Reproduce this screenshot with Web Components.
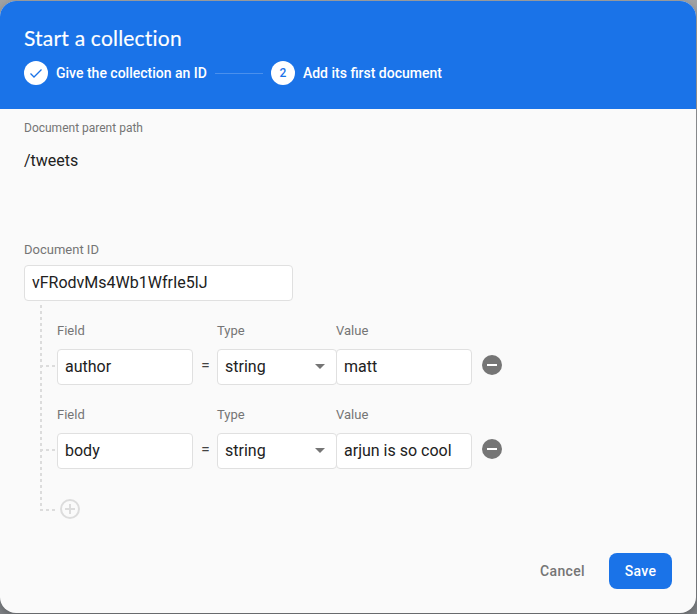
<!DOCTYPE html>
<html lang="en"><head><meta charset="utf-8"><title>Start a collection</title>
<style>
html,body{margin:0;height:100%;overflow:hidden}
body{background:linear-gradient(#a0a2a4,#94979b 40%,#808387);font-family:Roboto,"Liberation Sans",sans-serif;color:#212121}
</style></head><body>
<collection-dialog></collection-dialog>
<script>
const define=(name,html)=>customElements.define(name,class extends HTMLElement{
  constructor(){super();const t=document.createElement('template');t.innerHTML=html;
    this.attachShadow({mode:'open'}).append(t.content.cloneNode(true));}
});
define('step-item',`<style>
:host{display:flex;align-items:center;gap:8px;height:24px;font-size:14px;font-weight:500;letter-spacing:0;color:#fff;white-space:nowrap}
.dot{width:24px;height:24px;border-radius:50%;background:#fff;color:#1a73e8;display:grid;place-items:center;font-size:12px;letter-spacing:0}
</style><span class="dot"><slot name="mark"></slot></span><span><slot></slot></span>`);
define('dialog-header',`<style>
:host{display:block;box-sizing:border-box;height:108px;padding:22px 24px 0;background:#1a73e8;color:#fff}
h1{margin:0;font:400 21px/30px Lato,sans-serif;letter-spacing:.2px;-webkit-text-stroke:.15px #fff}
.steps{display:flex;align-items:center;gap:8px;margin-top:8px}
i{width:48px;height:1px;background:#4a90ed}
svg{display:block}
</style><h1><slot></slot></h1><div class="steps">
<step-item class="one"><svg slot="mark" width="14" height="12" viewBox="0 0 14 12"><path d="M1.5 6.5 5 10l7.5-7.5" fill="none" stroke="#1a73e8" stroke-width="1.3"/></svg>Give the collection an ID</step-item><i></i>
<step-item class="two"><span slot="mark">2</span>Add its first document</step-item></div>`);
define('text-field',`<style>
:host{display:flex;flex-direction:column;width:var(--w,136px);color:#212121}
label{font-size:13px;line-height:16px;color:#757575;white-space:nowrap}
.box{box-sizing:border-box;height:36px;margin-top:var(--gap,10px);border:1px solid #e0e0e0;border-radius:4px;background:#fff;padding:0 7px;display:flex;align-items:center;justify-content:space-between;font-size:16px;line-height:24px;white-space:nowrap}
svg{display:none}:host([menu]) svg{display:block;margin:0 4px 1px 0}
</style><label><slot name="label"></slot></label><div class="box"><span><slot></slot></span><svg width="10" height="5" viewBox="0 0 10 5"><path d="M0 0h10L5 5z" fill="#757575"/></svg></div>`);
define('field-row',`<style>
:host{display:flex;align-items:flex-end;height:63px;margin-bottom:21px}
.eq{width:25px;margin-right:-1px;height:36px;line-height:32px;text-align:center;font-size:15px;font-weight:500;color:#424242}
.type{--w:120px;margin-right:-1px}
.remove{width:20px;height:20px;margin:0 0 10px 10px}
</style><text-field><span slot="label">Field</span><slot name="field"></slot></text-field><span class="eq">=</span>
<text-field class="type" menu><span slot="label">Type</span>string</text-field>
<text-field><span slot="label">Value</span><slot name="value"></slot></text-field>
<svg class="remove" viewBox="0 0 20 20"><circle cx="10" cy="10" r="10" fill="#757575"/><path d="M5 10h10" stroke="#fff" stroke-width="2"/></svg>`);
define('field-tree',`<style>
:host{display:grid;grid-template-columns:17px 1fr;margin:4px 0 0 16px;height:216px}
.lines{width:17px;height:216px;overflow:visible}
.rows{padding-top:17px}
.add{display:block;width:20px;height:20px;margin:30px 0 0 3px}
</style><svg class="lines" viewBox="0 0 17 216"><g fill="none" stroke="#dcdcdc" stroke-width="2" stroke-dasharray="3 3"><path d="M1 0V205"/><path d="M0 61H16M0 145H16M0 205H16"/></g></svg>
<div class="rows"><slot></slot><svg class="add" viewBox="0 0 20 20"><g fill="none" stroke="#dcdcdc" stroke-width="2"><circle cx="10" cy="10" r="9"/><path d="M5 10h10M10 5v10"/></g></svg></div>`);
define('action-button',`<style>
:host{display:flex;align-items:center;justify-content:center;height:36px;border-radius:8px;font-size:14px;font-weight:500;letter-spacing:.35px;color:#757575}
:host([primary]){width:63px;background:#1a73e8;color:#fff}
</style><slot></slot>`);
define('collection-dialog',`<style>
:host{display:flex;flex-direction:column;box-sizing:border-box;width:696px;height:612px;margin-top:1px;border-radius:16px;overflow:hidden;background:#fafafa;box-shadow:0 3px 8px #0004}
main{padding:11px 24px 0;flex:1}
.cap{font-size:12px;line-height:16px;color:#757575}
.path{font-size:16px;line-height:24px;margin-top:13px;height:93px}
.id{--w:269px;--gap:7px}
footer{display:flex;justify-content:flex-end;gap:24px;padding:0 24px 24px}
</style><dialog-header>Start a collection</dialog-header><main>
<div class="cap">Document parent path</div><div class="path">/tweets</div>
<text-field class="id"><span slot="label">Document ID</span>vFRodvMs4Wb1WfrIe5lJ</text-field>
<field-tree><field-row><span slot="field">author</span><span slot="value">matt</span></field-row>
<field-row><span slot="field">body</span><span slot="value">arjun is so cool</span></field-row></field-tree></main>
<footer><action-button>Cancel</action-button><action-button primary>Save</action-button></footer>`);
</script></body></html>
